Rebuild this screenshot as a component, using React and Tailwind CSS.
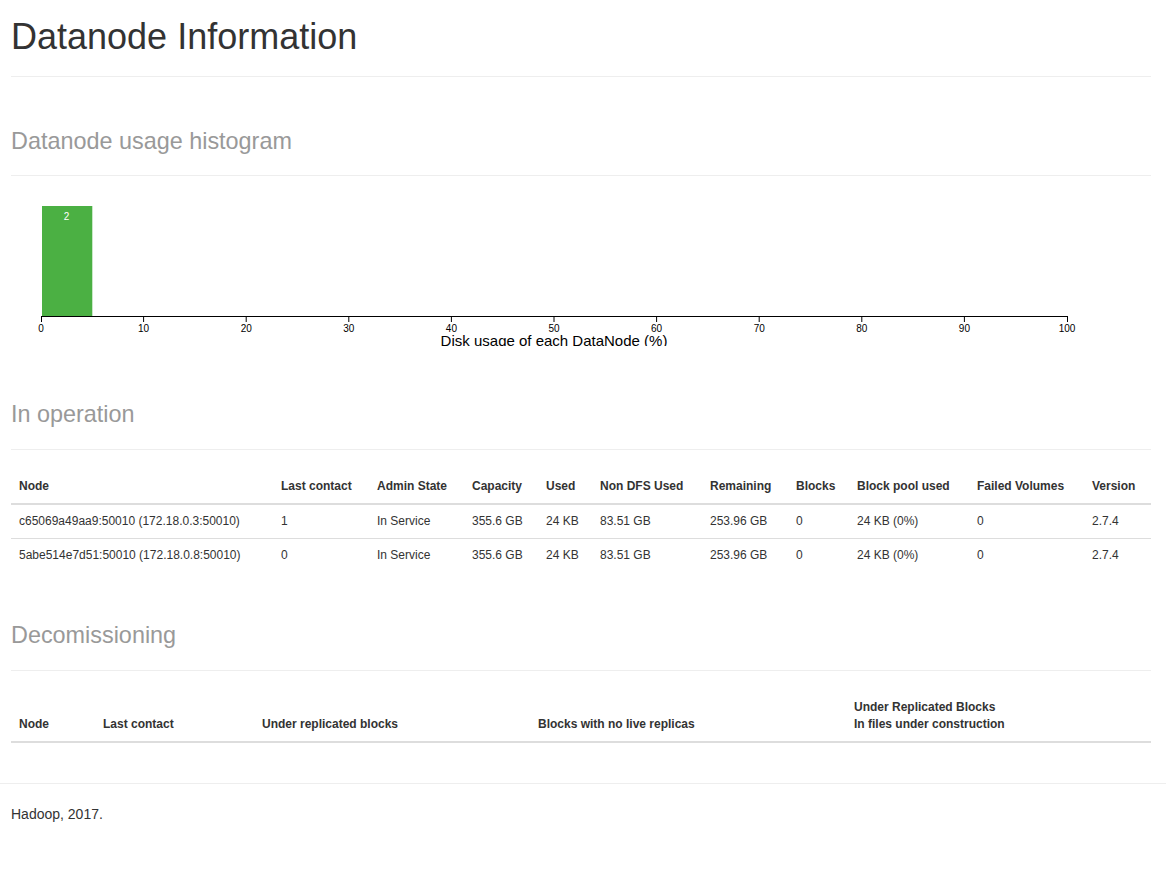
import React from "react";

const font = { fontFamily: '"Liberation Sans", Arial, Helvetica, sans-serif' };

function PageHeader({ children, big }) {
  return (
    <div className="border-b border-[#eeeeee] pb-[9px]">
      <h1 className="m-0 pb-[10px] text-[36px] leading-[1.1] font-normal text-[#333333]">
        {big ? children : <small className="text-[23.4px] leading-none text-[#999999]">{children}</small>}
      </h1>
    </div>
  );
}

function Histogram() {
  const W = 1026;
  const H = 110;
  const x = (v) => (v / 100) * W;
  const ticks = [0, 10, 20, 30, 40, 50, 60, 70, 80, 90, 100];
  return (
    <div className="h-[155px]">
      <svg width={W + 50} height={150} className="block">
        <g transform="translate(30,10)">
          <g>
            <rect x={1} y={0} width={x(5) - 1} height={H} fill="#4bb043" />
            <text x={x(5) / 2} y={6} dy=".75em" textAnchor="middle" fill="#ffffff" fontSize="10" style={font}>
              2
            </text>
          </g>
          <g transform={`translate(0,${H})`}>
            {ticks.map((t) => (
              <g key={t} transform={`translate(${x(t)},0)`}>
                {t !== 0 && t !== 100 && <line x1={0} x2={0} y1={0} y2={6} stroke="#000" />}
                <text y={9} dy=".71em" textAnchor="middle" fontSize="10" fill="#000" style={font}>
                  {t}
                </text>
              </g>
            ))}
            <path d={`M0.5,6V0.5H${W + 0.5}V6`} fill="none" stroke="#000" shapeRendering="crispEdges" />
          </g>
          <text x={W / 2} y={H + 30} textAnchor="middle" fontSize="15" fill="#000" style={font}>
            Disk usage of each DataNode (%)
          </text>
        </g>
      </svg>
    </div>
  );
}

const rows = [
  ["c65069a49aa9:50010 (172.18.0.3:50010)", "1", "In Service", "355.6 GB", "24 KB", "83.51 GB", "253.96 GB", "0", "24 KB (0%)", "0", "2.7.4"],
  ["5abe514e7d51:50010 (172.18.0.8:50010)", "0", "In Service", "355.6 GB", "24 KB", "83.51 GB", "253.96 GB", "0", "24 KB (0%)", "0", "2.7.4"],
];

const headers = ["Node", "Last contact", "Admin State", "Capacity", "Used", "Non DFS Used", "Remaining", "Blocks", "Block pool used", "Failed Volumes", "Version"];

export default function App() {
  return (
    <div className="min-h-[870px] bg-white text-[#333333] text-[14px] leading-[1.42857]" style={font}>
      <div className="ml-[11px] w-[1140px] pt-[17px]">
        <PageHeader big>Datanode Information</PageHeader>

        <div className="mt-[40px]">
          <PageHeader>Datanode usage histogram</PageHeader>
        </div>
        <div className="mt-[20px]">
          <Histogram />
        </div>

        <div className="mt-[39px]">
          <PageHeader>In operation</PageHeader>
        </div>
        <table className="mt-[20px] w-[1140px] table-fixed border-collapse text-[12px] leading-[1.42857]">
          <colgroup>
            <col className="w-[262px]" />
            <col className="w-[96px]" />
            <col className="w-[95px]" />
            <col className="w-[74px]" />
            <col className="w-[54px]" />
            <col className="w-[110px]" />
            <col className="w-[86px]" />
            <col className="w-[61px]" />
            <col className="w-[120px]" />
            <col className="w-[115px]" />
            <col className="w-[67px]" />
          </colgroup>
          <thead>
            <tr>
              {headers.map((h) => (
                <th key={h} className="p-[8px] text-left align-bottom font-bold border-b-2 border-[#dddddd] whitespace-nowrap">
                  {h}
                </th>
              ))}
            </tr>
          </thead>
          <tbody>
            {rows.map((r, i) => (
              <tr key={i}>
                {r.map((c, j) => (
                  <td key={j} className={`p-[8px] text-left align-top whitespace-nowrap ${i === 0 ? "" : "border-t border-[#dddddd]"}`}>
                    {c}
                  </td>
                ))}
              </tr>
            ))}
          </tbody>
        </table>

        <div className="mt-[39px]">
          <PageHeader>Decomissioning</PageHeader>
        </div>
        <table className="mt-[20px] w-[1140px] table-fixed border-collapse text-[12px] leading-[1.42857]">
          <colgroup>
            <col className="w-[84px]" />
            <col className="w-[159px]" />
            <col className="w-[276px]" />
            <col className="w-[316px]" />
            <col className="w-[305px]" />
          </colgroup>
          <thead>
            <tr>
              <th className="p-[8px] text-left align-bottom font-bold border-b-2 border-[#dddddd]">Node</th>
              <th className="p-[8px] text-left align-bottom font-bold border-b-2 border-[#dddddd]">Last contact</th>
              <th className="p-[8px] text-left align-bottom font-bold border-b-2 border-[#dddddd]">Under replicated blocks</th>
              <th className="p-[8px] text-left align-bottom font-bold border-b-2 border-[#dddddd]">Blocks with no live replicas</th>
              <th className="p-[8px] text-left align-bottom font-bold border-b-2 border-[#dddddd]">
                Under Replicated Blocks
                <br />
                In files under construction
              </th>
            </tr>
          </thead>
        </table>
      </div>

      <div className="mt-[40px] w-[1166px] border-t border-[#eeeeee]" />
      <div className="ml-[11px] pt-[20px]">
        <p className="m-0 leading-[20px]">Hadoop, 2017.</p>
      </div>
    </div>
  );
}
